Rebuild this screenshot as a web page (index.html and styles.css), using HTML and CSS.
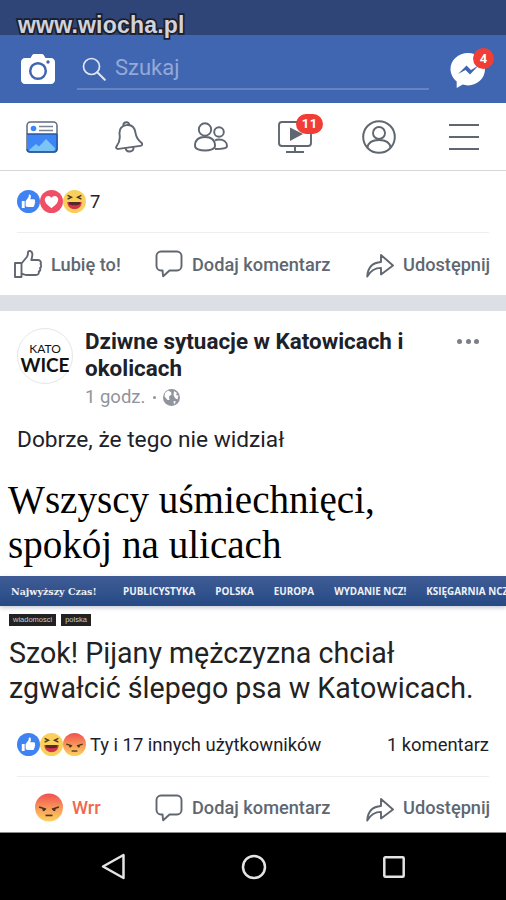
FILE: index.html
```html
<!DOCTYPE html>
<html lang="pl">
<head>
    <meta charset="UTF-8">
    <meta name="viewport" content="width=device-width, initial-scale=1.0">
    <title>Facebook</title>
    <link rel="stylesheet" href="styles.css">
</head>
<body>
    <!-- Ikony uzywane kilka razy -->
    <svg class="sprite" xmlns="http://www.w3.org/2000/svg">
        <defs>
            <linearGradient id="angry-grad" x1="0" y1="0" x2="0" y2="1">
                <stop offset="0" stop-color="#f0504f"/>
                <stop offset="0.6" stop-color="#f9a35c"/>
                <stop offset="1" stop-color="#fbd25e"/>
            </linearGradient>
        </defs>
        <symbol id="r-like" viewBox="0 0 24 24">
            <circle cx="12" cy="12" r="12" fill="#3f83f3"/>
            <path d="M5 11.500h3v7.200H5zM9 11.500l2.800-3.600c.4-.8.5-1.500.5-2.600 0-.9 2-.7 2.200 1 .1 1-.2 2.200-.7 3.400h3.700c1.300 0 1.700 1.300 1 2 .7.700.6 1.700-.1 2.200.4.800.2 1.600-.5 2 .2.900-.3 1.800-1.300 1.800H11.500c-1 0-1.600-.4-2.500-.7z" fill="#fff"/>
        </symbol>
        <symbol id="r-love" viewBox="0 0 24 24">
            <circle cx="12" cy="12" r="12" fill="#ef4e66"/>
            <path d="M12 19c-4-3-7-5.500-7-9 0-2.300 1.700-3.800 3.600-3.800 1.500 0 2.700.8 3.400 2 .7-1.200 1.900-2 3.400-2C17.300 6.200 19 7.700 19 10c0 3.500-3 6-7 9z" fill="#fff"/>
        </symbol>
        <symbol id="r-haha" viewBox="0 0 24 24">
            <circle cx="12" cy="12" r="12" fill="#f9d05c"/>
            <path d="M4.500 12.500h15c0 4.500-3.300 7.500-7.500 7.500s-7.500-3-7.500-7.500z" fill="#d8324a"/>
            <path d="M5.900 12.500h12.200c-.2.900-.3 1.500-.3 2.300-2 1.400-9.600 1.400-11.600 0 0-.8-.1-1.400-.3-2.300z" fill="#3b2a20" opacity="0.85"/>
            <path d="M4.800 5.500l4 2-4 2M19.200 5.500l-4 2 4 2" fill="none" stroke="#4a3520" stroke-width="1.500"/>
        </symbol>
        <symbol id="r-angry" viewBox="0 0 24 24">
            <circle cx="12" cy="12" r="12" fill="url(#angry-grad)"/>
            <path d="M3.500 11.500l6 2M20.500 11.500l-6 2" stroke="#4a3520" stroke-width="1.400" fill="none"/>
            <circle cx="7.500" cy="14" r="1.200" fill="#4a3520"/>
            <circle cx="16.500" cy="14" r="1.200" fill="#4a3520"/>
            <path d="M9 18.800h6" stroke="#4a3520" stroke-width="1.400"/>
        </symbol>
        <symbol id="a-comment" viewBox="0 0 28 28">
            <path d="M6 1.500h16c2.500 0 4.500 2 4.500 4.500v10c0 2.500-2 4.500-4.500 4.500h-7.500L8.200 26.300c-.4-2-.6-3.800-.6-5.800H6c-2.500 0-4.500-2-4.500-4.500V6c0-2.500 2-4.500 4.500-4.500z" fill="none" stroke="#606770" stroke-width="1.900" stroke-linejoin="round"/>
        </symbol>
        <symbol id="a-share" viewBox="0 0 28 28">
            <path d="M1.200 26.500C1.800 17.500 7 12.500 15 12V5l12 10.500L15 24.500v-6.600c-6 0-10.500 3-13.800 8.600z" fill="none" stroke="#606770" stroke-width="1.900" stroke-linejoin="round"/>
        </symbol>
    </svg>

    <div class="page">
        <div class="status-bar"></div>
        <div class="watermark">www.wiocha.pl</div>

        <!-- Pasek gorny -->
        <header class="top-bar">
            <svg class="camera" width="34" height="30" viewBox="0 0 34 30">
                <path d="M4 4h5.500l1.500-2.500c.5-1 1.200-1.500 2.200-1.500h7.600c1 0 1.700.5 2.200 1.500L24.500 4H30c2.200 0 4 1.800 4 4v18c0 2.200-1.800 4-4 4H4c-2.200 0-4-1.800-4-4V8c0-2.200 1.800-4 4-4z" fill="#fff"/>
                <circle cx="17" cy="17" r="7.800" fill="none" stroke="#4166b1" stroke-width="2.500"/>
                <circle cx="27" cy="8" r="1.700" fill="#4166b1"/>
            </svg>
            <div class="search">
                <svg width="24" height="24" viewBox="0 0 24 24">
                    <circle cx="9.500" cy="9.500" r="8" fill="none" stroke="#dfe6f4" stroke-width="1.700"/>
                    <path d="M15.300 15.300l7.500 7.500" stroke="#dfe6f4" stroke-width="2" stroke-linecap="round"/>
                </svg>
                <span>Szukaj</span>
            </div>
            <div class="messenger">
                <svg width="36" height="36" viewBox="0 0 36 36">
                    <path d="M18 1C8.400 1 .5 8 .5 17c0 5 2.500 9.400 6.200 12.400V36l6-3.400c1.700.5 3.400.8 5.300.8 9.600 0 17-7.300 17-16.400S27.600 1 18 1z" fill="#fff"/>
                    <path d="M8 22l8.500-8.500 4.500 4.500 7.500-4.500-8.500 9-4.500-4.500z" fill="#4166b1"/>
                </svg>
                <span class="badge badge-small">4</span>
            </div>
        </header>

        <!-- Zakladki -->
        <nav class="tabs">
            <div class="tab">
                <svg width="32" height="32" viewBox="0 0 32 32">
                    <rect x="1" y="1" width="30" height="30" rx="3.500" fill="#fff" stroke="#5f6a7d" stroke-width="1.500"/>
                    <path d="M1 13h30v15c0 1.700-1.300 3-3 3H4c-1.700 0-3-1.300-3-3z" fill="#3e86f5"/>
                    <path d="M3 29l7-6 3 2.500 7-7.500 9 9v1c0 1-1 2-2 2H5c-1 0-2-.5-2-1z" fill="#7cc4f6"/>
                    <path d="M1 13h30M1 28c0 1.700 1.300 3 3 3h24c1.700 0 3-1.300 3-3V13" fill="none" stroke="#26589e" stroke-width="1.500"/>
                    <circle cx="7.500" cy="7.500" r="2.800" fill="#3e86f5"/>
                    <path d="M13 5.500h14M13 9.500h14" stroke="#7b8494" stroke-width="1.600"/>
                </svg>
            </div>
            <div class="tab">
                <svg class="bell" width="30" height="34" viewBox="0 0 30 34">
                    <g transform="rotate(-8 15 17)" fill="none" stroke="#606770" stroke-width="1.900" stroke-linejoin="round">
                        <path d="M15 5C9 5 7 9 7 14 7 19 5 22 2.500 24.500 1 26 2 27.500 4 27.500H26C28 27.500 29 26 27.500 24.500 25 22 23 19 23 14 23 9 21 5 15 5Z"/>
                        <path d="M12 5.500C12 1 18 1 18 5.500"/>
                        <path d="M11 27.500C11 33 19 33 19 27.500"/>
                    </g>
                </svg>
            </div>
            <div class="tab">
                <svg width="34" height="30" viewBox="0 0 34 30">
                    <circle cx="11" cy="7.500" r="6.200" fill="none" stroke="#606770" stroke-width="1.900"/>
                    <path d="M1 24c0-6 4-9 10-9s10 3 10 9c0 6-20 6-20 0z" fill="none" stroke="#606770" stroke-width="1.900"/>
                    <circle cx="25" cy="10" r="4.800" fill="none" stroke="#606770" stroke-width="1.900"/>
                    <path d="M21 18.500c1-.7 2.500-1 4-1 4.500 0 8 2.500 8 6.500 0 2.500-3.500 3-12 3" fill="none" stroke="#606770" stroke-width="1.900"/>
                </svg>
            </div>
            <div class="tab">
                <div class="video">
                    <svg width="34" height="32" viewBox="0 0 34 32">
                        <path d="M17 25H4c-1.700 0-3-1.300-3-3V4c0-1.700 1.300-3 3-3h26c1.700 0 3 1.300 3 3v18c0 1.700-1.300 3-3 3z M17 25v5 M8 31h18" fill="none" stroke="#606770" stroke-width="1.900"/>
                        <path d="M12 6.500L25 13 12 20z" fill="#606770"/>
                    </svg>
                    <span class="badge badge-wide">11</span>
                </div>
            </div>
            <div class="tab">
                <svg width="34" height="34" viewBox="0 0 34 34">
                    <circle cx="17" cy="17" r="15.800" fill="none" stroke="#606770" stroke-width="2"/>
                    <circle cx="17" cy="13" r="6" fill="none" stroke="#606770" stroke-width="1.900"/>
                    <path d="M5.500 27.500c.7-5 5.500-7.500 11.500-7.500s10.800 2.500 11.500 7.500" fill="none" stroke="#606770" stroke-width="1.900"/>
                </svg>
            </div>
            <div class="tab">
                <div class="burger"><i></i><i></i><i></i></div>
            </div>
        </nav>

        <!-- Poprzedni post -->
        <section class="post-end">
            <div class="stats">
                <div class="faces">
                    <svg><use href="#r-like"/></svg>
                    <svg><use href="#r-love"/></svg>
                    <svg><use href="#r-haha"/></svg>
                </div>
                <span>7</span>
            </div>
            <div class="actions">
                <div class="action">
                    <svg width="28" height="28" viewBox="0 0 28 28">
                        <path d="M7.500 13.500l5.300-6.500c1-1.300 1.200-2.500 1.200-4.500 0-2.300 3.800-2.200 4.300 1 .3 2-.3 4.300-1 6.500h6.700c2.500 0 3.500 2.500 2.500 4 1.200 1.500.7 3.300-.5 4 .7 1.600 0 3-1.200 3.600.4 1.900-.8 3.400-2.800 3.400H13c-2.200 0-3.800-1-5.500-1.500M1 13h6.500v14H1z" fill="none" stroke="#606770" stroke-width="1.900" stroke-linejoin="round"/>
                    </svg>
                    <span>Lubię to!</span>
                </div>
                <div class="action">
                    <svg width="28" height="28"><use href="#a-comment"/></svg>
                    <span>Dodaj komentarz</span>
                </div>
                <div class="action">
                    <svg width="28" height="28"><use href="#a-share"/></svg>
                    <span>Udostępnij</span>
                </div>
            </div>
        </section>

        <div class="separator"></div>

        <!-- Post -->
        <article class="post">
            <div class="post-head">
                <div class="avatar">
                    <span class="avatar-top">KATO</span>
                    <span class="avatar-bottom">WICE</span>
                </div>
                <div class="post-meta">
                    <h2>Dziwne sytuacje w Katowicach i okolicach</h2>
                    <div class="post-time">
                        <span>1 godz.</span>
                        <span class="dot"></span>
                        <svg width="17" height="17" viewBox="0 0 17 17">
                            <circle cx="8.500" cy="8.500" r="8.500" fill="#90949c"/>
                            <path d="M5 1.500l3 1.500 .5 2.500L6 7.500 6.500 11 4.500 11 1.500 7.500 2 4zM11 2l3 2-1 2 2.500.5-1 4-2.500-1.500-1.500-3zM10.500 12l2.500.5-2 3z" fill="#fff"/>
                        </svg>
                    </div>
                </div>
                <div class="more"><i></i><i></i><i></i></div>
            </div>
            <p class="post-text">Dobrze, że tego nie widział</p>

            <div class="shot">
                <div class="shot-caption">Wszyscy uśmiechnięci,<br>spokój na ulicach</div>
                <div class="site-nav">
                    <b class="site-logo">Najwyższy Czas!</b>
                    <span>PUBLICYSTYKA</span>
                    <span>POLSKA</span>
                    <span>EUROPA</span>
                    <span>WYDANIE NCZ!</span>
                    <span>KSIĘGARNIA NCZ!</span>
                </div>
                <div class="site-tags">
                    <span>wiadomosci</span>
                    <span>polska</span>
                </div>
                <div class="site-title">Szok! Pijany mężczyzna chciał<br>zgwałcić ślepego psa w Katowicach.</div>
            </div>

            <div class="stats stats-bottom">
                <div class="faces">
                    <svg><use href="#r-like"/></svg>
                    <svg><use href="#r-haha"/></svg>
                    <svg><use href="#r-angry"/></svg>
                </div>
                <span>Ty i 17 innych użytkowników</span>
                <span class="comments">1 komentarz</span>
            </div>
            <div class="actions actions-bottom">
                <div class="action action-wrr">
                    <svg width="28" height="29"><use href="#r-angry"/></svg>
                    <span>Wrr</span>
                </div>
                <div class="action">
                    <svg width="28" height="28"><use href="#a-comment"/></svg>
                    <span>Dodaj komentarz</span>
                </div>
                <div class="action">
                    <svg width="28" height="28"><use href="#a-share"/></svg>
                    <span>Udostępnij</span>
                </div>
            </div>
        </article>

        <!-- Pasek systemowy -->
        <footer class="system-bar">
            <svg width="24" height="27" viewBox="0 0 24 27">
                <path d="M22.500 2v23L2 13.500z" fill="none" stroke="#e4e4e4" stroke-width="2.500" stroke-linejoin="round"/>
            </svg>
            <svg width="26" height="26" viewBox="0 0 26 26">
                <circle cx="13" cy="13" r="11" fill="none" stroke="#e4e4e4" stroke-width="2.500"/>
            </svg>
            <svg width="22" height="22" viewBox="0 0 22 22">
                <rect x="1.300" y="1.300" width="19.400" height="19.400" rx="1" fill="none" stroke="#e4e4e4" stroke-width="2.500"/>
            </svg>
        </footer>
    </div>
</body>
</html>
```

FILE: styles.css
```css
* { box-sizing: border-box; }
html, body { margin: 0; padding: 0; }
body { font-family: Roboto, Arial, sans-serif; background-color: #fff; color: #1d2129; }
svg { display: block; flex: none; }
.sprite { position: absolute; width: 0; height: 0; }
.page { position: relative; width: 506px; height: 900px; overflow: hidden; }

.status-bar { height: 35px; background: #2f4578; }
.watermark { position: absolute; left: 18px; top: 10px; font-family: "Liberation Sans", Arial, sans-serif; font-size: 23px; line-height: 30px; font-weight: bold; letter-spacing: 0.2px; color: #cfd3de; -webkit-text-stroke: 3.500px #1c1f2b; paint-order: stroke fill; }

.top-bar { height: 68px; background: #4166b1; display: flex; align-items: flex-start; padding-left: 21px; }
.camera { margin-top: 19px; }
.search { width: 352px; height: 55px; margin-left: 22px; border-bottom: 2px solid #6484c2; display: flex; align-items: flex-start; padding: 22px 0 0 5px; }
.search span { margin: -3px 0 0 9px; font-size: 22px; line-height: 28px; color: #93a9d8; }
.messenger { position: relative; margin: 17px 0 0 21px; }

.badge { position: absolute; display: block; background: #f03d36; color: #fff; font-weight: bold; text-align: center; border-radius: 11px; }
.badge-small { top: -4px; right: -8px; width: 21px; height: 21px; font-size: 13px; line-height: 21px; }
.badge-wide { top: -7px; left: 18px; width: 27px; height: 20px; font-size: 13px; line-height: 20px; letter-spacing: 0.5px; }

.tabs { height: 68px; display: flex; align-items: center; border-bottom: 1px solid #d6d7da; }
.tab { flex: 1; display: flex; justify-content: center; align-items: center; }
.bell { margin-left: 3px; }
.video { position: relative; }
.burger { width: 30px; height: 26px; display: flex; flex-direction: column; justify-content: space-between; }
.burger i { display: block; height: 2px; background: #606770; }

.stats { display: flex; align-items: center; gap: 4px; height: 62px; margin: 0 17px 0 17px; border-bottom: 1px solid #eeeff1; font-size: 18.400px; color: #1d2129; }
.faces { display: flex; }
.faces svg { width: 23px; height: 23px; }
.comments { margin-left: auto; }

.actions { display: grid; grid-template-columns: 141px 211px 1fr; height: 62px; padding-left: 14px; align-items: center; }
.action { display: flex; align-items: center; gap: 9px; font-size: 18.200px; font-weight: 500; color: #606770; }
.action svg { width: 28px; height: 28px; }

.separator { height: 16px; background: #dddfe6; }

.post-head { display: flex; align-items: flex-start; padding: 17px 0 0 17px; }
.avatar { width: 56px; height: 56px; flex: none; padding-top: 3px; border: 1px solid #e6e6e6; border-radius: 50%; display: flex; flex-direction: column; align-items: center; justify-content: center; font-family: Lato, Arial, sans-serif; color: #111; }
.avatar-top { font-size: 12px; line-height: 13px; }
.avatar-bottom { font-size: 19px; line-height: 19px; font-weight: bold; }
.post-meta { width: 340px; margin-left: 12px; }
.post-meta h2 { margin: 0; font-size: 22.400px; line-height: 27px; font-weight: bold; color: #1d2129; }
.post-time { display: flex; align-items: center; margin-top: 3px; font-size: 18.500px; line-height: 24px; color: #90949c; }
.dot { width: 3px; height: 3px; margin: 0 7px 0 8px; border-radius: 50%; background: #90949c; }
.more { display: flex; gap: 3.500px; margin: 11px 0 0 32px; }
.more i { display: block; width: 5px; height: 5px; border-radius: 50%; background: #7b7f87; }

.post-text { margin: 17px 0 0 17px; font-size: 22.700px; line-height: 28px; color: #1d2129; }

.shot { margin-top: 23px; }
.shot-caption { padding-left: 8px; height: 99px; font-family: "Liberation Serif", "Times New Roman", serif; font-size: 39.100px; line-height: 45px; color: #000; }
.site-nav { height: 30px; padding-left: 11px; background: linear-gradient(#3f5c96, #264a84); color: #eef1f7; display: flex; align-items: center; gap: 20px; white-space: nowrap; overflow: hidden; font-family: "Open Sans", Arial, sans-serif; font-size: 9.900px; font-weight: bold; box-shadow: 0 2px 4px rgba(40, 60, 100, 0.25); }
.site-logo { width: 92px; flex: none; font-family: "DejaVu Serif", serif; font-size: 9.500px; }
.site-tags { display: flex; gap: 5px; padding: 8px 0 0 9px; }
.site-tags span { background: #222; color: #c9c9c9; font-family: "Liberation Sans", Arial, sans-serif; font-size: 7.500px; line-height: 12px; padding: 0 4px; }
.site-title { padding: 10px 0 0 9px; font-size: 28.600px; line-height: 35px; color: #222; height: 86px; }

.stats-bottom { height: 65px; }
.actions-bottom { height: 55px; padding-top: 6px; }
.action-wrr { padding-left: 21px; color: #f0694f; }
.action-wrr svg { height: 29px; }

.system-bar { height: 68px; background: #000; border-top: 1px solid #8a8a8a; display: flex; align-items: center; padding: 0 101px; justify-content: space-between; }
```
